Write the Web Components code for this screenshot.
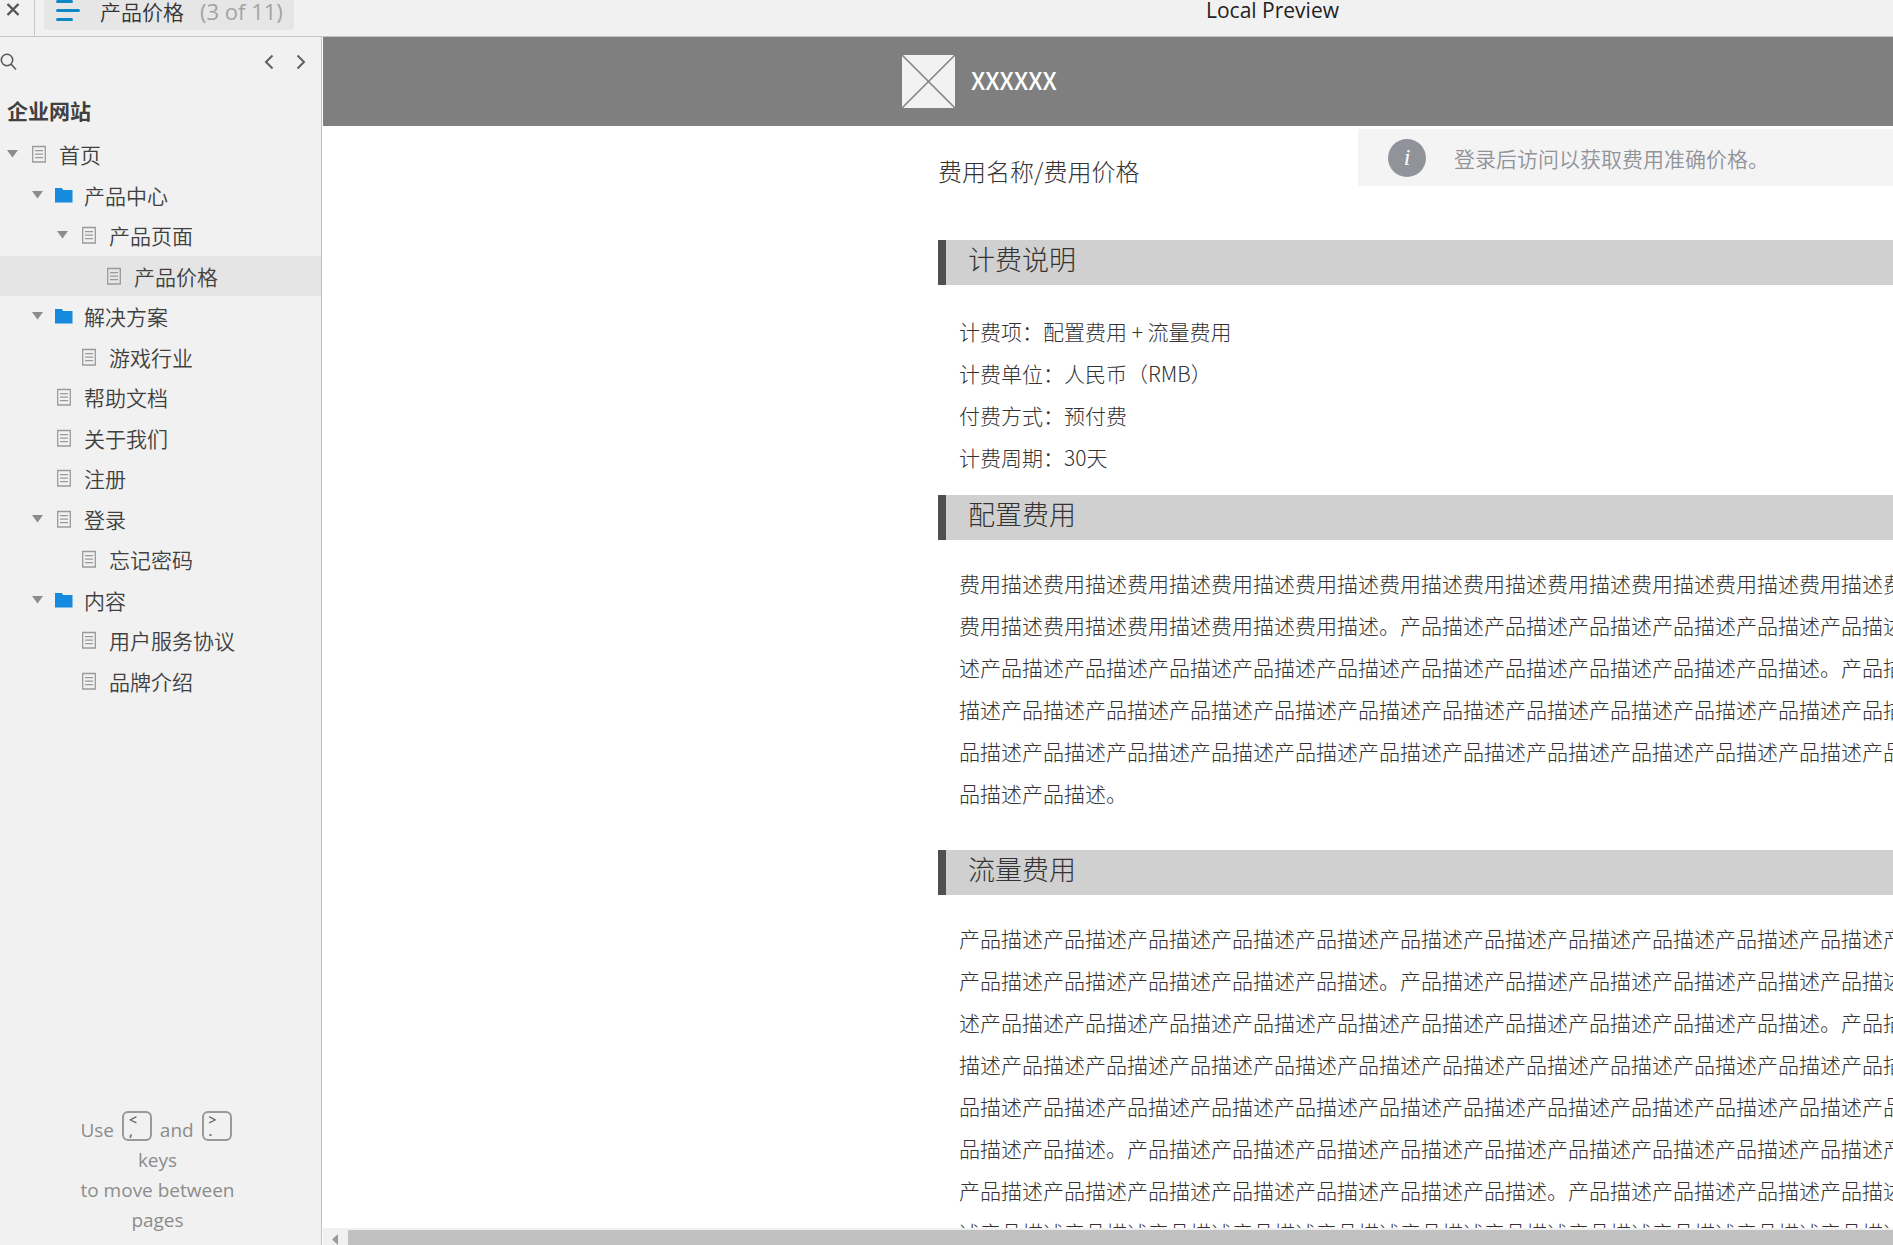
<!DOCTYPE html>
<html lang="zh-CN">
<head>
<meta charset="utf-8">
<title>产品价格</title>
<style>
  html, body { height: 100%; margin: 0; }
  body { overflow: hidden; background: #fff; color: #404040; font-family: "Noto Sans CJK SC", sans-serif; font-size: 21px; }
</style>
</head>
<body>
<preview-app></preview-app>
<script>
const define = (name, html, setup) => customElements.define(name, class extends HTMLElement {
  connectedCallback() {
    if (this.shadowRoot) return;
    const t = document.createElement('template');
    t.innerHTML = html;
    this.attachShadow({ mode: 'open' }).append(t.content.cloneNode(true));
    if (setup) setup(this, this.shadowRoot);
  }
});

define('top-bar', `
<style>
  :host { display: flex; height: 36px; background: #f1f1f1; border-bottom: 1px solid #c4c4c4; }
  button { border: 0; background: none; padding: 0; font: inherit; color: inherit; display: flex; }
  .close { border-right: 1px solid #c8c8c8; padding: 3px 0 0 6px; width: 28px; box-sizing: content-box; }
  .pages { margin-left: 9px; width: 250px; height: 30px; background: #e6e6e6; border-radius: 0 0 4px 4px; padding-left: 12px; box-sizing: border-box; line-height: 22px; color: #333; font-weight: 350; }
  .pages span { margin-left: 18px; white-space: nowrap; }
  .pages .count { margin-left: 16px; color: #a3a3a3; font-family: "Open Sans", sans-serif; font-size: 22px; font-weight: 400; }
  .title { margin-left: 912px; color: #222; font: 21px/20px "Open Sans", sans-serif; white-space: nowrap; }
  svg { display: block; flex: none; }
</style>
<button class="close" aria-label="Close"><svg width="14" height="14" viewBox="0 0 14 14" stroke="#555" stroke-width="2.4"><path d="M1.500 1l11 11M12.500 1l-11 11"/></svg></button>
<button class="pages"><svg width="26" height="24" viewBox="0 0 26 24" stroke="#0e89c4" stroke-width="3" stroke-linecap="round"><path d="M1.500 1.500h14M1.500 10.500h21M1.500 19.500h14"/></svg><span>产品价格</span><span class="count">(3 of 11)</span></button>
<div class="title">Local Preview</div>`);

define('tree-item', `
<style>
  :host { display: flex; flex: 1; align-items: center; padding-left: calc(7px + 25px * var(--depth, 0)); font-weight: 350; }
  :host([selected]) { background: #e5e5e5; }
  button { border: 0; background: none; padding: 0; width: 12px; height: 12px; display: flex; }
  button.leaf { visibility: hidden; }
  .icon { width: 18px; margin: 0 11px 0 11px; display: flex; justify-content: center; }
  a { color: #404040; text-decoration: none; line-height: 30px; white-space: nowrap; }
  svg { display: block; }
  .doc, .folder { display: none; }
  :host([kind=doc]) .doc, :host([kind=folder]) .folder { display: block; }
</style>
<button aria-label="Toggle"><svg width="12" height="12"><path d="M0 2h11l-5.500 7.500z" fill="#8c8c8c"/></svg></button>
<span class="icon">
  <svg class="doc" width="16" height="20" fill="none" stroke="#9a9a9a" stroke-width="1.300"><path d="M1.700 2.500h12.600v15.500H1.700z M4 6.700h8M4 10.200h8M4 13.700h8"/></svg>
  <svg class="folder" width="18" height="18"><path d="M0 2h7l1 2h9.500v12.500H0z" fill="#158ade"/></svg>
</span>
<a href="#"><slot></slot></a>`, (host, root) => {
  host.style.setProperty('--depth', host.getAttribute('depth'));
  if (!host.hasAttribute('open')) root.querySelector('button').classList.add('leaf');
});

define('key-cap', `
<style>
  :host { display: inline-flex; flex-direction: column; box-sizing: border-box; width: 30px; height: 30px; border: 2px solid #999; border-radius: 6px; padding: 1px 0 0 5px; margin: 0 3px; vertical-align: 12px; text-align: left; color: #666; font: 600 14px/11px "Open Sans", sans-serif; }
</style><slot></slot>`);

define('side-bar', `
<style>
  :host { display: flex; flex-direction: column; box-sizing: border-box; width: 322px; flex: none; background: #f1f1f1; border-right: 1px solid #c0c0c0; }
  .tools { display: flex; align-items: center; height: 49px; padding-right: 14px; }
  .tools button { border: 0; background: none; padding: 0; display: flex; }
  .tools .search { margin-right: auto; }
  .tools .next { margin-left: 20px; }
  h1 { margin: 9px 0 0 7px; font-size: 21px; line-height: 30px; height: 39px; font-weight: 700; color: #404040; }
  nav { display: flex; flex-direction: column; height: 567px; }
  .hint { margin: auto 81px 10px 75px; text-align: center; color: #8c8c8c; font: 19px/30px "Open Sans", sans-serif; white-space: nowrap; }
</style>
<div class="tools">
  <button class="search" aria-label="Search"><svg width="18" height="18" fill="none" stroke="#555" stroke-width="1.500"><circle cx="7" cy="7" r="5.700"/><path d="M11 11l5 5.500"/></svg></button>
  <button aria-label="Previous"><svg width="12" height="16" fill="none" stroke="#606060" stroke-width="2"><path d="M9.500 1.500L3 8l6.500 6.500"/></svg></button>
  <button class="next" aria-label="Next"><svg width="12" height="16" fill="none" stroke="#606060" stroke-width="2"><path d="M2.500 1.500L9 8l-6.500 6.500"/></svg></button>
</div>
<h1>企业网站</h1>
<nav>
  <tree-item depth="0" kind="doc" open>首页</tree-item>
  <tree-item depth="1" kind="folder" open>产品中心</tree-item>
  <tree-item depth="2" kind="doc" open>产品页面</tree-item>
  <tree-item depth="3" kind="doc" selected>产品价格</tree-item>
  <tree-item depth="1" kind="folder" open>解决方案</tree-item>
  <tree-item depth="2" kind="doc">游戏行业</tree-item>
  <tree-item depth="1" kind="doc">帮助文档</tree-item>
  <tree-item depth="1" kind="doc">关于我们</tree-item>
  <tree-item depth="1" kind="doc">注册</tree-item>
  <tree-item depth="1" kind="doc" open>登录</tree-item>
  <tree-item depth="2" kind="doc">忘记密码</tree-item>
  <tree-item depth="1" kind="folder" open>内容</tree-item>
  <tree-item depth="2" kind="doc">用户服务协议</tree-item>
  <tree-item depth="2" kind="doc">品牌介绍</tree-item>
</nav>
<div class="hint">Use <key-cap><span>&lt;</span><span>,</span></key-cap> and <key-cap><span>&gt;</span><span>.</span></key-cap><br>keys<br>to move between<br>pages</div>`);

define('site-banner', `
<style>
  :host { display: flex; align-items: center; height: 89px; flex: none; background: #7f7f7f; padding-left: 579px; color: #fff; font-size: 24px; font-weight: 500; gap: 16px; }
  svg { display: block; }
  span { padding-bottom: 4px; }
</style>
<svg width="53" height="53"><path d="M0 0h53v53H0z" fill="#f2f2f2"/><path d="M0 0l53 53M53 0L0 53" stroke="#7f7f7f" stroke-width="1.500"/></svg>
<span><slot></slot></span>`);

define('info-alert', `
<style>
  :host { display: flex; align-items: center; flex: 1; height: 57px; background: #f4f4f5; color: #909399; font-size: 21px; font-weight: 350; padding-left: 30px; gap: 28px; white-space: nowrap; box-sizing: border-box; }
  i { width: 38px; height: 38px; border-radius: 50%; background: #909399; color: #fff; font: italic 24px/36px "Liberation Serif", serif; text-align: center; }
</style>
<i>i</i><span><slot></slot></span>`);

define('fee-section', `
<style>
  :host { display: block; }
  h2 { margin: 0; height: 45px; box-sizing: border-box; border-left: 8px solid #4f4f4f; background: #d0d0d0; padding-left: 22px; font-size: 27px; line-height: 38px; font-weight: 300; color: #333; }
  .body { width: 76em; padding: var(--body-top, 22px) 0 0 21px; line-height: 42px; font-weight: 300; color: #333; line-break: anywhere; }
</style>
<h2></h2><div class="body"><slot></slot></div>`, (host, root) => {
  root.querySelector('h2').textContent = host.getAttribute('heading');
});

define('price-page', `
<style>
  :host { display: flex; flex-direction: column; flex: 1; min-width: 0; overflow: hidden; }
  .view { flex: 1; min-height: 0; overflow: hidden; }
  .intro { display: flex; align-items: flex-start; padding: 3px 0 0 615px; height: 111px; }
  h1 { margin: 0; width: 420px; font-size: 24px; line-height: 84px; font-weight: 300; color: #333; }
  fee-section { margin-left: 615px; }
  fee-section p { margin: 0; }
  .list { --body-top: 25px; margin-bottom: 17px; }
  .desc { margin-bottom: 36px; }
  .scroll { flex: none; height: 17px; background: #f1f1f1; display: flex; }
  .scroll button { border: 0; padding: 4px 0 0 8px; width: 25px; background: none; display: flex; }
  .thumb { flex: 1; margin-top: 2px; background: #c1c1c1; }
</style>
<site-banner>XXXXXX</site-banner>
<div class="view">
  <div class="intro"><h1>费用名称/费用价格</h1><info-alert>登录后访问以获取费用准确价格。</info-alert></div>
  <fee-section class="list" heading="计费说明">
    <p>计费项：配置费用 + 流量费用</p><p>计费单位：人民币（RMB）</p><p>付费方式：预付费</p><p>计费周期：30天</p>
  </fee-section>
  <fee-section class="desc" heading="配置费用"><p id="config"></p></fee-section>
  <fee-section heading="流量费用"><p id="traffic"></p></fee-section>
</div>
<div class="scroll"><button aria-label="Scroll left"><svg width="8" height="13"><path d="M7 2v11L1 7.500z" fill="#9a9a9a"/></svg></button><div class="thumb"></div></div>`, (host, root) => {
  const fee = '费用描述'.repeat(24) + '。', product = '产品描述'.repeat(24) + '。';
  root.getElementById('config').textContent = fee + product.repeat(3);
  root.getElementById('traffic').textContent = product.repeat(8);
});

define('preview-app', `
<style>
  :host { display: flex; flex-direction: column; height: 100vh; overflow: hidden; }
  main { display: flex; flex: 1; min-height: 0; gap: 1px; }
</style>
<top-bar></top-bar>
<main><side-bar></side-bar><price-page></price-page></main>`);
</script>
</body>
</html>
